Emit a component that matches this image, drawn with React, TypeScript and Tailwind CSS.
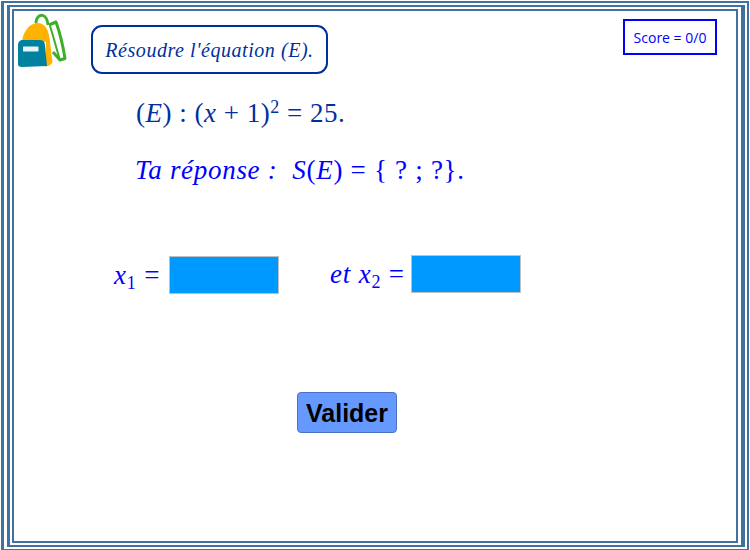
const serif = "font-['Liberation_Serif',serif]";

// coordinates below are the page pixels of the reference, hence the viewBox offset
function Backpack() {
  return (
    <svg width="52" height="58" viewBox="16 12 52 58" className="shrink-0">
      <path d="M36 23 C36 17 40 14.5 43 15.5 C46 16.5 47.5 20 48 25" fill="none" stroke="#3fae2a" strokeWidth="2.8" />
      <path d="M49 25 L56 22 C60 33 63 46 65 58.5 L60 60 L53 52" fill="none" stroke="#3fae2a" strokeWidth="3" strokeLinejoin="round" />
      <path d="M50 26 C53 35 56 47 60 60" fill="none" stroke="#3fae2a" strokeWidth="2" />
      <path d="M22 42 C23 31 30 23 38 23 C46 23.5 49 31 50 42 L52.5 62 C51.5 65 48 66.5 45 66.5 L46 42 Z" fill="#ffb300" />
      <path d="M18 45 C18 42 20 40 23 40 L40 40 C44 40 45 43 45 46 L47 66 L22 67 C19 67 18 66 18 64 Z" fill="#00829f" />
      <rect x="23" y="46.5" width="15.5" height="5" rx="0.5" fill="#e8f4f6" />
    </svg>
  );
}

export default function App() {
  return (
    <div className="w-[750px] h-[550px] bg-white pl-[1px] pt-[1px] pr-[1px]">
      <div className="h-full border-l-[3px] border-t-[2px] border-r-[2px] border-b-[1px] border-[#41719f] pl-[3px] pt-[2px] pr-[2px] pb-[2px]">
        <div className="h-full border-l-[3px] border-t-[2px] border-r-[4px] border-b-[2px] border-[#41719f] pl-[2px] pt-[2px] pr-[3px] pb-[2px]">
          <div className="h-full border-2 border-[#41719f] bg-white flex flex-col">
            {/* header */}
            <div className="flex items-start pl-[2px] pr-[19px] pt-[1px]">
              <Backpack />
              <div className={`ml-[23px] mt-[13px] w-[237px] h-[49px] flex items-center justify-center rounded-[11px] border-2 border-[#00309c] text-[#00309c] text-[20px] italic tracking-[0.55px] ${serif}`}>
                Résoudre l'équation (E).
              </div>
              <div className="ml-auto mt-[7px] w-[94px] h-[36px] flex items-center justify-center border-2 border-[#0000ff] text-[#0000ff] text-[14px] font-['Open_Sans',sans-serif]">
                Score = 0/0
              </div>
            </div>

            {/* equation */}
            <p className={`mt-[19px] ml-[122px] h-[40px] text-[27px] leading-[40px] tracking-[0.5px] text-[#00309c] ${serif}`}>
              (<i>E</i>) : (<i>x</i> + 1)<sup className="text-[18px] leading-none">2</sup> = 25.
            </p>

            {/* answer */}
            <p className={`mt-[17px] ml-[121px] h-[40px] text-[27px] leading-[40px] tracking-[0.7px] text-[#0000ff] whitespace-pre ${serif}`}>
              <i>Ta réponse :</i>  <i>S</i>(<i>E</i>) = {'{'} ? ; ?{'}'}.
            </p>

            {/* inputs */}
            <div className={`mt-[66px] ml-[100px] flex items-start text-[27px] text-[#0000ff] ${serif}`}>
              <span className="w-[55px] h-[38px] leading-[38px] whitespace-nowrap tracking-[0.8px]">
                <i>x</i><sub className="text-[18px]">1</sub> =
              </span>
              <div className="w-[110px] h-[38px] bg-[#0099ff] border border-[#c0c0c0]" />
              <span className="ml-[51px] -mt-[1px] w-[81px] h-[38px] leading-[38px] whitespace-nowrap tracking-[0.8px]">
                <i>et x</i><sub className="text-[18px]">2</sub> =
              </span>
              <div className="-mt-[1px] w-[110px] h-[38px] bg-[#0099ff] border border-[#c0c0c0]" />
            </div>

            {/* submit */}
            <button className="mt-[98px] ml-[283px] w-[100px] h-[41px] rounded-[4px] bg-[#6699ff] border border-[#4a72c0] pt-[3px] text-black text-[25px] font-bold font-['Liberation_Sans',sans-serif] flex items-center justify-center">
              Valider
            </button>
          </div>
        </div>
      </div>
    </div>
  );
}
